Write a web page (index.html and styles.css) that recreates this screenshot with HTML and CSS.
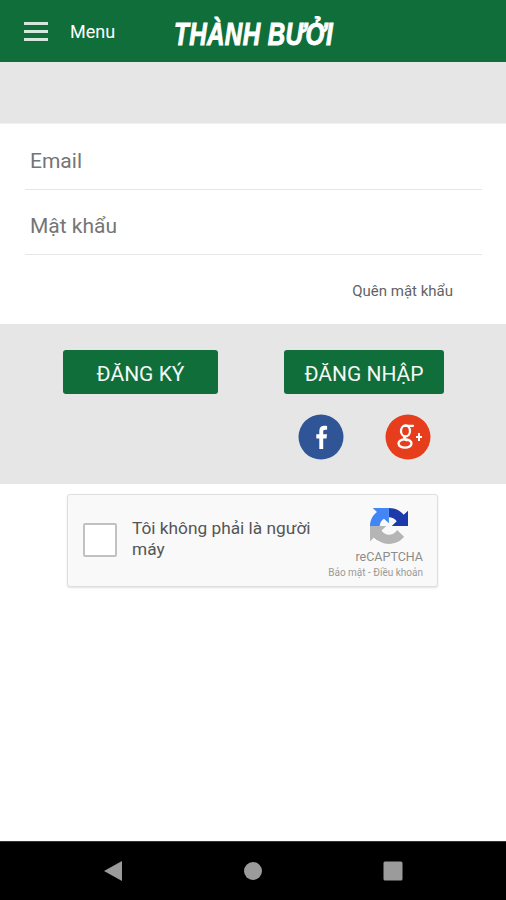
FILE: index.html
```html
<!DOCTYPE html>
<html lang="vi">
<head>
<meta charset="utf-8">
<title>Thành Bưởi</title>
<link rel="stylesheet" href="styles.css">
</head>
<body>
<div class="page">
  <header class="topbar">
    <div class="burger"><span></span><span></span><span></span></div>
    <span class="menu-label">Menu</span>
    <span class="logo">THÀNH BƯỞI</span>
  </header>
  <div class="band"></div>
  <form class="fields">
    <div class="field">Email</div>
    <div class="field field-second">Mật khẩu</div>
    <div class="forgot">Quên mật khẩu</div>
  </form>
  <section class="actions">
    <div class="buttons">
      <div class="btn btn-register">ĐĂNG KÝ</div>
      <div class="btn btn-login">ĐĂNG NHẬP</div>
    </div>
    <div class="socials">
      <svg class="social" viewBox="0 0 46 46" width="46" height="46">
        <circle cx="23" cy="23" r="22.500" fill="#2f5597"/>
        <path d="M25.200 35V24.500h3.300l.5-4.300h-3.800v-2.500c0-1.200.4-1.900 2-1.900h1.900v-3.900c-.4-.1-1.600-.2-2.900-.2-3 0-4.900 1.800-4.900 5.300v3.200h-3v4.300h3V35z" fill="#fff"/>
      </svg>
      <svg class="social" viewBox="0 0 46 46" width="46" height="46">
        <circle cx="23" cy="23" r="22.500" fill="#e63e1c"/>
        <g fill="none" stroke="#fff" stroke-width="2.300" stroke-linecap="round">
          <ellipse cx="20.500" cy="17" rx="4.500" ry="5.500"/>
          <ellipse cx="20" cy="29.500" rx="6.500" ry="4.200"/>
          <path d="M20 22.500c-1.800 1.500-.5 2.800 1.800 3.800M21 11.800h7"/>
        </g>
        <path d="M31 22h2v-3h2v3h2v2h-2v3h-2v-3h-2z" fill="#fff"/>
      </svg>
    </div>
  </section>
  <section class="captcha-wrap">
    <div class="captcha">
      <div class="check"></div>
      <div class="captcha-text">Tôi không phải là người máy</div>
      <div class="brand">
        <svg class="re-icon" viewBox="0 0 64 64" width="38" height="36" preserveAspectRatio="none">
          <path d="M31.862.002l-1.370.033H4.594l7.160 7.160C4.580 13.054 0 21.970 0 31.953c0 10.400 4.960 19.622 12.640 25.458l11.860-11.736a15.550 15.550 0 0 1-5.334-4.754c-1.600-2.050-2.906-4.952-2.906-8.968 0-.485.057-.860.163-1.135.393-4.976 3.140-9.288 7.124-11.828l8.307 8.307.001-26.200" fill="#4285f4"/>
          <path d="M64 31.955l-.033-1.370V4.687l-7.160 7.160C50.948 4.674 42.033.093 32.050.093c-10.400 0-19.622 4.960-25.458 12.640l11.736 11.860a15.550 15.550 0 0 1 4.754-5.334c2.050-1.600 4.952-2.906 8.968-2.906.485 0 .860.057 1.135.163 4.976.393 9.288 3.140 11.828 7.124l-8.307 8.307 26.200.001" fill="#1c3aa9" clip-path="url(#re-right)"/>
          <clipPath id="re-right"><rect x="32" y="0" width="32" height="33"/></clipPath>
          <path d="M.002 31.953l.033 1.370v25.898l7.160-7.160c5.860 7.173 14.775 11.754 24.760 11.754 10.400 0 19.622-4.960 25.458-12.640l-11.736-11.860a15.550 15.550 0 0 1-4.754 5.334c-2.050 1.600-4.952 2.906-8.968 2.906-.485 0-.860-.057-1.135-.163-4.976-.393-9.288-3.140-11.828-7.124l8.307-8.307-26.200-.001" fill="#b5b5b5"/>
        </svg>
        <div class="re-name">reCAPTCHA</div>
        <div class="re-links">Bảo mật - Điều khoản</div>
      </div>
    </div>
  </section>
  <div class="spacer"></div>
  <nav class="navbar">
    <svg viewBox="0 0 20 22" width="20" height="22"><path d="M19 1v20L1 11z" fill="#9b9b9b"/></svg>
    <svg viewBox="0 0 20 20" width="20" height="20"><circle cx="10" cy="10" r="9" fill="#9b9b9b"/></svg>
    <svg viewBox="0 0 20 20" width="20" height="20"><rect x="0.500" y="0.500" width="19" height="19" rx="1.500" fill="#9b9b9b"/></svg>
  </nav>
</div>
</body>
</html>
```

FILE: styles.css
```css
* { box-sizing: border-box; }
html, body { margin: 0; padding: 0; background: #fff; }
.page {
  width: 506px;
  height: 900px;
  display: flex;
  flex-direction: column;
  font-family: Roboto, "Liberation Sans", sans-serif;
  overflow: hidden;
}
.topbar {
  height: 62px;
  background: #0f6e3a;
  display: flex;
  align-items: center;
  padding-left: 24px;
  color: #fff;
  flex: none;
}
.burger {
  width: 24px;
  display: flex;
  flex-direction: column;
  gap: 5.500px;
  margin-top: 1px;
}
.burger span { display: block; height: 2.500px; background: #d5e6da; }
.menu-label {
  margin-left: 22px;
  font-size: 18px;
  width: 104px;
  margin-top: 1px;
}
.logo {
  font-family: "Liberation Sans", sans-serif;
  font-weight: 700;
  font-style: italic;
  font-size: 31px;
  letter-spacing: 0.500px;
  white-space: nowrap;
  display: inline-block;
  transform: scaleX(0.780);
  transform-origin: left center;
  margin-top: 7px;
  -webkit-text-stroke: 1px #fff;
}
.band { height: 61px; background: #e6e6e7; flex: none; }
.fields {
  height: 201px;
  padding: 0 24px 0 25px;
  flex: none;
  background: #fff;
  border-top: 1px solid #f1f1f1;
}
.field {
  height: 66px;
  border-bottom: 1px solid #e6e6e6;
  padding: 26px 0 0 5px;
  font-size: 21px;
  line-height: 22px;
  color: #757575;
}
.field-second { height: 65px; padding-top: 25px; }
.forgot {
  text-align: right;
  padding: 28px 29px 0 0;
  font-size: 15px;
  line-height: 16px;
  color: #636363;
}
.actions {
  height: 160px;
  background: #e6e6e6;
  padding-top: 26px;
  flex: none;
}
.buttons { display: flex; padding-left: 63px; gap: 66px; }
.btn {
  height: 44px;
  padding-top: 3px;
  background: #0f6e3a;
  border-radius: 3px;
  color: #f4f8f5;
  font-size: 21px;
  display: flex;
  align-items: center;
  justify-content: center;
}
.btn-register { width: 155px; }
.btn-login { width: 160px; }
.socials {
  display: flex;
  gap: 41px;
  padding-left: 298px;
  margin-top: 20px;
}
.social { display: block; }
.captcha-wrap {
  padding: 10px 0 0 67px;
  flex: none;
}
.captcha {
  width: 371px;
  height: 93px;
  background: #f9f9f9;
  border: 1px solid #dfdfdf;
  border-radius: 3px;
  box-shadow: 0 1px 2px rgba(0, 0, 0, 0.120);
  display: flex;
  position: relative;
}
.check {
  width: 34px;
  height: 34px;
  margin: 28px 0 0 15px;
  background: #fff;
  border: 2px solid #c1c1c1;
  border-radius: 2px;
  flex: none;
}
.captcha-text {
  width: 190px;
  margin: 23px 0 0 15px;
  font-size: 17.300px;
  line-height: 21px;
  color: #555;
}
.brand {
  margin-left: auto;
  padding: 13px 14px 0 0;
  display: flex;
  flex-direction: column;
  align-items: flex-end;
  color: #9a9a9a;
}
.re-icon { margin-right: 15px; display: block; }
.re-name { font-size: 12.500px; line-height: 14px; margin-top: 6px; color: #8c8c8c; }
.re-links { font-size: 10px; line-height: 11px; margin-top: 3px; white-space: nowrap; }
.spacer { flex: 1; }
.navbar {
  height: 59px;
  background: #000;
  border-top: 1px solid #333;
  flex: none;
  display: flex;
  align-items: center;
  padding: 0 103px;
  justify-content: space-between;
}
```
